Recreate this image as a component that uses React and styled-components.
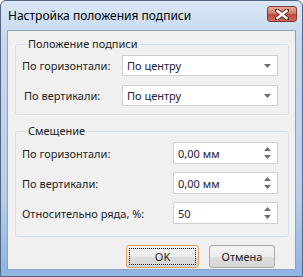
import React from 'react';
import styled, { createGlobalStyle } from 'styled-components';

const GlobalStyle = createGlobalStyle`
  html, body {
    margin: 0;
    padding: 0;
    background: #ffffff;
  }
  body {
    font-family: "Noto Sans", sans-serif;
    font-size: 11px;
    color: #1e1e1e;
  }
  * {
    box-sizing: border-box;
  }
`

const Window = styled.div`
  width: 303px;
  height: 277px;
  display: flex;
  flex-direction: column;
  border: 1px solid #52647f;
  border-radius: 6px 6px 0 0;
  background: linear-gradient(#d9e6f5, #c6d9ef 40px, #b8cfeb 70%, #8fb4e2);
  padding: 0 6px 6px;
`

const TitleBar = styled.div`
  height: 29px;
  display: flex;
  align-items: flex-start;
  justify-content: space-between;
  padding-left: 1px;
`

const Title = styled.div`
  font-size: 12px;
  line-height: 16px;
  margin-top: 7px;
  color: #000;
`

const CloseButton = styled.div`
  width: 30px;
  height: 16px;
  margin-top: 5px;
  margin-right: -1px;
  border: 1px solid #7a3a34;
  border-radius: 3px;
  background: linear-gradient(#e9a99c, #d47b6d 45%, #c04a3b 55%, #d26b5b);
  display: flex;
  align-items: center;
  justify-content: center;
`

const Client = styled.div`
  flex: 1;
  border: 1px solid #8ca3c1;
  background: #f0f0f0;
  padding: 6px 6px 0 7px;
  display: flex;
  flex-direction: column;
`

const Group = styled.fieldset`
  margin: ${p => p.$gap}px 0 0;
  padding: 4px 10px ${p => p.$bottom}px 6px;
  border: 1px solid #d5dfe5;
  border-radius: 3px;
  display: grid;
  grid-template-columns: ${p => p.$label}px 1fr;
  row-gap: ${p => p.$rowGap}px;
  align-items: center;
`

const Legend = styled.legend`
  padding: 0 2px;
  margin-left: 4px;
  line-height: 14px;
  font-size: 11px;
  color: #1e1e1e;
`

const Label = styled.div`
  padding-left: ${p => p.$indent || 0}px;
  white-space: nowrap;
`

const Field = styled.div`
  height: ${p => p.$h}px;
  border: 1px solid #cfcfcf;
  background: #ffffff;
  display: flex;
  align-items: center;
  justify-content: space-between;
  padding: 0 6px 0 4px;
  color: #1b2240;
`

const Arrows = styled.div`
  display: flex;
  flex-direction: column;
  gap: 4px;
`

const Buttons = styled.div`
  display: flex;
  justify-content: flex-end;
  gap: 10px;
  margin-top: 8px;
  padding-right: 14px;
`

const Button = styled.div`
  width: ${p => p.$w}px;
  height: 23px;
  border: 1px solid ${p => (p.$default ? '#e0a060' : '#a9a9a9')};
  border-radius: 3px;
  background: linear-gradient(#f4f4f4, #ececec 50%, #dedede 51%, #d6d6d6);
  display: flex;
  align-items: center;
  justify-content: center;
  font-size: 11px;
  color: #1e1e1e;
  position: relative;
  &::after {
    content: '';
    display: ${p => (p.$default ? 'block' : 'none')};
    position: absolute;
    inset: 2px;
    border: 1px dotted #000;
  }
`

const Down = () => (
  <svg width="7" height="4" viewBox="0 0 7 4">
    <path d="M0 0h7L3.5 4z" fill="#6d6d6d" />
  </svg>
)

const Up = () => (
  <svg width="7" height="4" viewBox="0 0 7 4">
    <path d="M0 4h7L3.5 0z" fill="#6d6d6d" />
  </svg>
)

const Select = ({ value }) => (
  <Field $h={21}>
    <span>{value}</span>
    <Down />
  </Field>
)

const Spin = ({ value }) => (
  <Field $h={22}>
    <span>{value}</span>
    <Arrows>
      <Up />
      <Down />
    </Arrows>
  </Field>
)

export default function App() {
  return (
    <>
      <GlobalStyle />
      <Window>
        <TitleBar>
          <Title>Настройка положения подписи</Title>
          <CloseButton>
            <svg width="14" height="11" viewBox="0 0 14 11">
              <path d="M2 1.5l10 8M12 1.5l-10 8" stroke="#5a2420" strokeWidth="4.2" strokeLinecap="square" />
              <path d="M2.5 2l9 7M11.5 2l-9 7" stroke="#ffffff" strokeWidth="2.4" strokeLinecap="square" />
            </svg>
          </CloseButton>
        </TitleBar>
        <Client>
          <Group $gap={0} $bottom={8} $label={100} $rowGap={9}>
            <Legend>Положение подписи</Legend>
            <Label>По горизонтали:</Label>
            <Select value="По центру" />
            <Label $indent={2}>По вертикали:</Label>
            <Select value="По центру" />
          </Group>
          <Group $gap={9} $bottom={12} $label={151} $rowGap={8}>
            <Legend>Смещение</Legend>
            <Label>По горизонтали:</Label>
            <Spin value="0,00 мм" />
            <Label>По вертикали:</Label>
            <Spin value="0,00 мм" />
            <Label>Относительно ряда, %:</Label>
            <Spin value="50" />
          </Group>
          <Buttons>
            <Button $w={73} $default>OK</Button>
            <Button $w={66}>Отмена</Button>
          </Buttons>
        </Client>
      </Window>
    </>
  )
}
